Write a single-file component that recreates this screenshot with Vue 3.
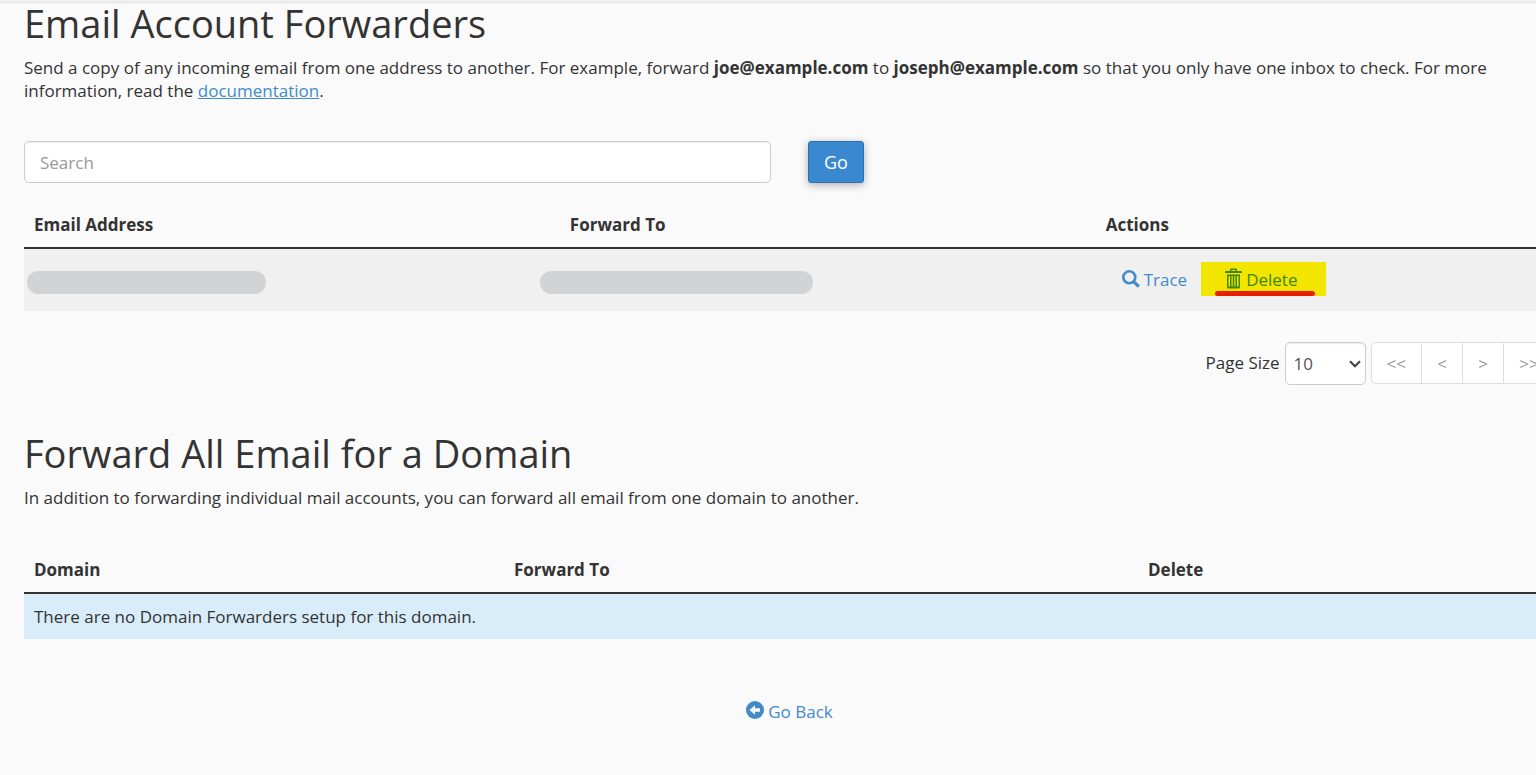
<script setup>
import { ref } from 'vue'

const search = ref('')
const pageSize = ref('10')
const pages = ['<<', '<', '>', '>>']
</script>

<template>
  <div class="viewport">
    <main class="content">
      <section>
        <h2>Email Account Forwarders</h2>
        <p>
          Send a copy of any incoming email from one address to another. For example, forward
          <strong>joe@example.com</strong> to <strong>joseph@example.com</strong> so that you only
          have one inbox to check. For more information, read the <a class="doc" href="#">documentation</a>.
        </p>
        <form class="search" @submit.prevent>
          <input v-model="search" type="text" placeholder="Search" aria-label="Search" />
          <button type="submit" class="go">Go</button>
        </form>
        <table class="accounts">
          <thead>
            <tr>
              <th class="c35">Email Address</th>
              <th class="c35">Forward To</th>
              <th>Actions</th>
            </tr>
          </thead>
          <tbody>
            <tr>
              <td class="masked"><div class="mask mask-from"></div></td>
              <td class="masked"><div class="mask mask-to"></div></td>
              <td>
                <div class="actions">
                  <a href="#" class="trace">
                    <svg width="18" height="18" viewBox="0 0 18 18" aria-hidden="true">
                      <circle cx="7.3" cy="7.3" r="6" fill="none" stroke="currentColor" stroke-width="2.6" />
                      <path d="M11.4 11.4 16.8 16.6" stroke="currentColor" stroke-width="3.2" />
                    </svg>
                    <span>Trace</span>
                  </a>
                  <a href="#" class="delete">
                    <svg width="17" height="21" viewBox="0 0 17 21" aria-hidden="true">
                      <path
                        fill="currentColor"
                        fill-rule="evenodd"
                        d="M5 3V1.5Q5 .5 6 .5h5q1 0 1 1V3h4q1 0 1 1v1H0V4q0-1 1-1zM6.5 3h4V2h-4zM2 6.5h13V19q0 1.5-1.5 1.5h-10Q2 20.5 2 19zM3.5 8v10.5H5V8zM6.5 8v10.5h1.2V8zM9.3 8v10.5h1.2V8zM12 8v10.5h1.5V8z"
                      />
                    </svg>
                    <span>Delete</span>
                  </a>
                </div>
              </td>
            </tr>
          </tbody>
        </table>
        <div class="pager">
          <label for="page-size">Page Size</label>
          <div class="select">
            <select id="page-size" v-model="pageSize">
              <option>10</option>
              <option>20</option>
              <option>50</option>
              <option>100</option>
            </select>
            <svg width="12" height="8" viewBox="0 0 12 8" aria-hidden="true">
              <path d="M1 1.2 6 6.2 11 1.2" fill="none" stroke="#444" stroke-width="2.2" />
            </svg>
          </div>
          <nav class="pages" aria-label="Pages">
            <button v-for="p in pages" :key="p" type="button" disabled>{{ p }}</button>
          </nav>
        </div>
      </section>

      <section>
        <h2>Forward All Email for a Domain</h2>
        <p>In addition to forwarding individual mail accounts, you can forward all email from one domain to another.</p>
        <table class="domains">
          <thead>
            <tr>
              <th class="d1">Domain</th>
              <th class="d2">Forward To</th>
              <th>Delete</th>
            </tr>
          </thead>
          <tbody>
            <tr>
              <td colspan="3">There are no Domain Forwarders setup for this domain.</td>
            </tr>
          </tbody>
        </table>
      </section>

      <div class="back">
        <a href="#">
          <svg width="18" height="18" viewBox="0 0 18 18" aria-hidden="true">
            <circle cx="9" cy="9" r="9" fill="currentColor" />
            <path d="M3.5 9 9 4.2V7.3h5v3.4H9v3.1z" fill="#fafafa" />
          </svg>
          <span>Go Back</span>
        </a>
      </div>
    </main>
  </div>
</template>

<style>
body {
  margin: 0;
  background: #fafafa;
}
</style>

<style scoped>
.viewport {
  overflow: hidden;
  min-height: 100vh;
  box-sizing: border-box;
  border-top: 1px solid #f4f4f4;
  background: linear-gradient(#e4e4e4, #fafafa) top / 100% 4px no-repeat;
  color: #333;
  font: 17px/23px "Open Sans", sans-serif;
}
.content {
  margin: 0 -19px 0 24px;
}
h2 {
  margin: 0;
  font-size: 38px;
  font-weight: 400;
  line-height: 44px;
}
p {
  margin: 11px 0 0;
}
a {
  color: #428bca;
  text-decoration: none;
}
.doc {
  text-decoration: underline;
}
input,
select,
button {
  box-sizing: border-box;
  font: inherit;
}
.search {
  display: flex;
  gap: 37px;
  margin-top: 39px;
}
.search input {
  width: 747px;
  height: 42px;
  padding: 0 15px;
  border: 1px solid #ccc;
  border-radius: 5px;
  background: #fff;
  box-shadow: inset 0 1px 1px rgba(0, 0, 0, 0.08);
}
.search input::placeholder {
  color: #999;
  opacity: 1;
}
.go {
  width: 56px;
  height: 42px;
  padding: 0;
  border: 1px solid #2a71b3;
  border-radius: 3px;
  background: #3a89d0;
  color: #fff;
  font-size: 18px;
  box-shadow: 0 2px 8px rgba(0, 0, 0, 0.3);
}
table {
  width: 100%;
  border-collapse: separate;
  border-spacing: 0;
  table-layout: fixed;
}
th {
  padding: 10px 10px 11px;
  border-bottom: 2px solid #333;
  text-align: left;
  font-weight: 700;
}
.accounts {
  margin-top: 20px;
}
.c35 {
  width: 35%;
  box-sizing: border-box;
}
.accounts td {
  height: 62px;
  padding: 0;
  background: #f0f0f0;
}
.accounts .masked {
  height: 58px;
  padding: 4px 0 0 3px;
}
.mask {
  height: 23px;
  border-radius: 12px;
  background: #d2d3d5;
}
.mask-from {
  width: 239px;
}
.mask-to {
  width: 273px;
  margin-left: -23px;
}
.actions {
  display: flex;
  align-items: flex-start;
  height: 36px;
  padding-left: 26px;
}
.actions a {
  display: flex;
  gap: 4px;
  padding-top: 6px;
}
.trace svg {
  margin-top: 2px;
}
.actions .delete {
  position: relative;
  box-sizing: border-box;
  width: 125px;
  height: 34px;
  margin-left: 14px;
  padding-left: 24px;
  background: #f2e600;
  color: #3f8500;
}
.delete::after {
  content: "";
  position: absolute;
  left: 14px;
  bottom: 0;
  width: 100px;
  height: 5px;
  border-radius: 3px;
  background: #e82000;
}
.pager {
  display: flex;
  justify-content: flex-end;
  align-items: flex-start;
  gap: 5px;
  margin: 31px 0 46px;
}
.pager label {
  line-height: 42px;
}
.select {
  position: relative;
}
.select select {
  display: block;
  appearance: none;
  width: 81px;
  height: 43px;
  padding: 0 8px;
  border: 1px solid #ccc;
  border-radius: 5px;
  background: #fff;
  color: #555;
  box-shadow: inset 0 1px 1px rgba(0, 0, 0, 0.08);
}
.select svg {
  position: absolute;
  right: 5px;
  top: 18px;
  pointer-events: none;
}
.pages {
  display: flex;
}
.pages button {
  min-width: 41px;
  height: 42px;
  padding: 0 15px;
  border: 1px solid #ddd;
  border-right-width: 0;
  background: #fff;
  color: #999;
}
.pages button:first-child {
  min-width: 50px;
  border-radius: 5px 0 0 5px;
}
.pages button:last-child {
  min-width: 52px;
  border-right-width: 1px;
  border-radius: 0 5px 5px 0;
}
.domains {
  margin-top: 39px;
}
.domains .d1 {
  width: 460px;
}
.domains .d2 {
  width: 614px;
}
.domains td {
  padding: 11px 10px;
  background: #d8edf9;
}
.back {
  margin-top: 61px;
  text-align: center;
}
.back a {
  display: inline-flex;
  gap: 4px;
}
.back svg {
  margin-top: 1px;
}
</style>
